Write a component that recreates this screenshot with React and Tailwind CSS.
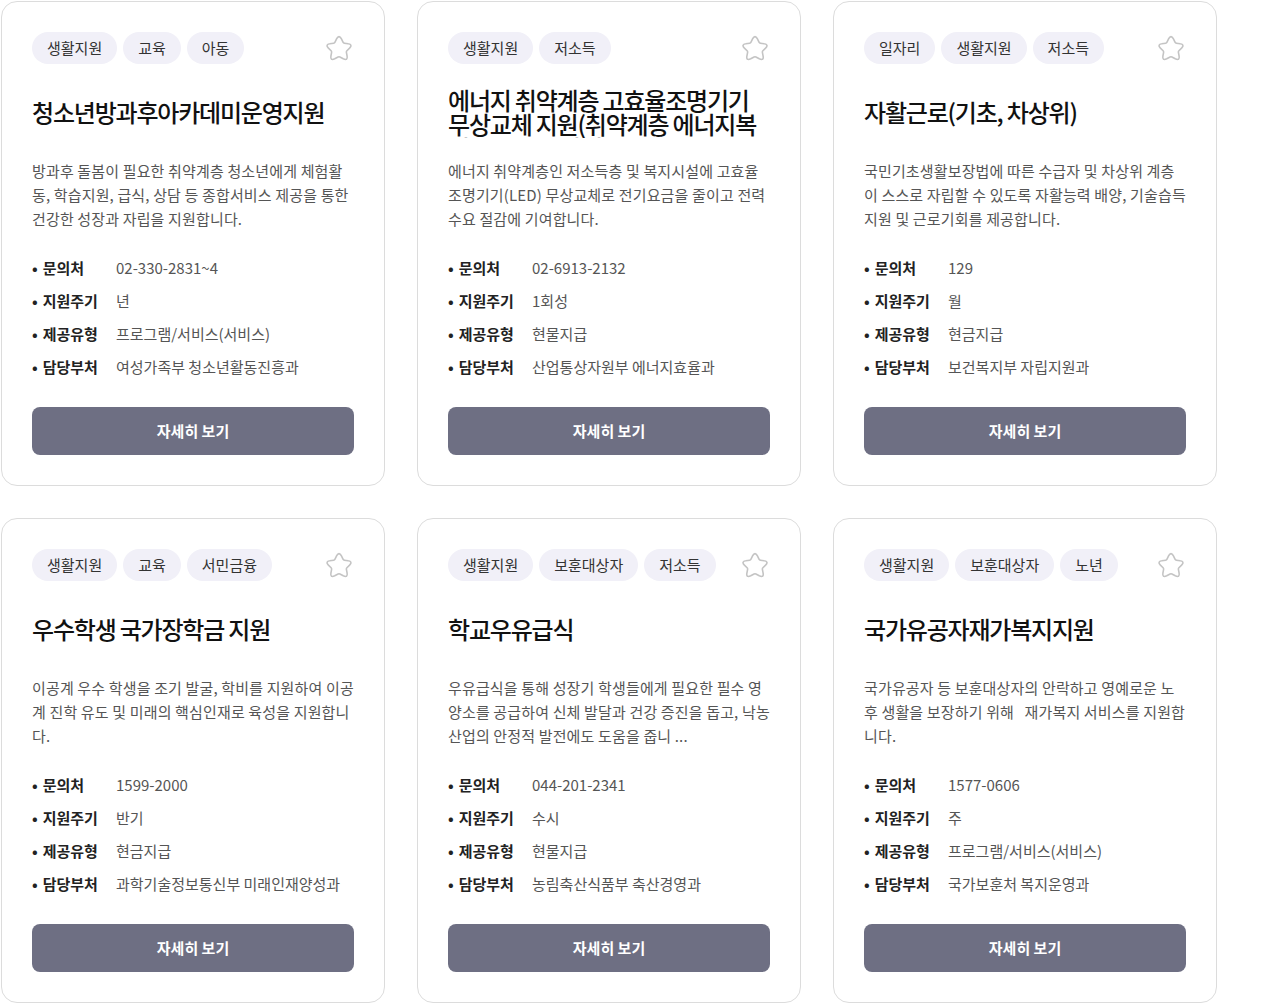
import React from 'react';

const cards = [
  {
    tags: ['생활지원', '교육', '아동'],
    title: '청소년방과후아카데미운영지원',
    desc: '방과후 돌봄이 필요한 취약계층 청소년에게 체험활동, 학습지원, 급식, 상담 등 종합서비스 제공을 통한 건강한 성장과 자립을 지원합니다.',
    info: ['02-330-2831~4', '년', '프로그램/서비스(서비스)', '여성가족부 청소년활동진흥과'],
  },
  {
    tags: ['생활지원', '저소득'],
    title: '에너지 취약계층 고효율조명기기 무상교체 지원(취약계층 에너지복지 LED 보급사업)',
    long: true,
    desc: '에너지 취약계층인 저소득층 및 복지시설에 고효율 조명기기(LED) 무상교체로 전기요금을 줄이고 전력 수요 절감에 기여합니다.',
    info: ['02-6913-2132', '1회성', '현물지급', '산업통상자원부 에너지효율과'],
  },
  {
    tags: ['일자리', '생활지원', '저소득'],
    title: '자활근로(기초, 차상위)',
    desc: '국민기초생활보장법에 따른 수급자 및 차상위 계층이 스스로 자립할 수 있도록 자활능력 배양, 기술습득 지원 및 근로기회를 제공합니다.',
    info: ['129', '월', '현금지급', '보건복지부 자립지원과'],
  },
  {
    tags: ['생활지원', '교육', '서민금융'],
    title: '우수학생 국가장학금 지원',
    desc: '이공계 우수 학생을 조기 발굴, 학비를 지원하여 이공계 진학 유도 및 미래의 핵심인재로 육성을 지원합니다.',
    info: ['1599-2000', '반기', '현금지급', '과학기술정보통신부 미래인재양성과'],
  },
  {
    tags: ['생활지원', '보훈대상자', '저소득'],
    title: '학교우유급식',
    desc: '우유급식을 통해 성장기 학생들에게 필요한 필수 영양소를 공급하여 신체 발달과 건강 증진을 돕고, 낙농 산업의 안정적 발전에도 도움을 줍니 ...',
    info: ['044-201-2341', '수시', '현물지급', '농림축산식품부 축산경영과'],
  },
  {
    tags: ['생활지원', '보훈대상자', '노년'],
    title: '국가유공자재가복지지원',
    desc: '국가유공자 등 보훈대상자의 안락하고 영예로운 노후 생활을 보장하기 위해 \u00a0 재가복지 서비스를 지원합니다.',
    info: ['1577-0606', '주', '프로그램/서비스(서비스)', '국가보훈처 복지운영과'],
  },
];

const labels = ['문의처', '지원주기', '제공유형', '담당부처'];

// rounded outline star
const StarIcon = () => (
  <svg width="30" height="30" viewBox="0 0 30 30" fill="none">
    <path
      d="M15 3.6c1 0 1.6.7 2.3 2.1l1.7 3.5c.3.6.8.9 1.4 1l3.8.6c1.5.2 2.4.6 2.7 1.5.3.9-.2 1.8-1.3 2.8l-2.7 2.7c-.4.4-.6 1-.5 1.6l.7 3.8c.3 1.5.2 2.5-.6 3-.8.6-1.8.3-3.2-.4l-3.4-1.8c-.6-.3-1.2-.3-1.8 0l-3.4 1.8c-1.4.7-2.4 1-3.2.4-.8-.5-.9-1.5-.6-3l.7-3.8c.1-.6-.1-1.2-.5-1.6l-2.7-2.7c-1.1-1-1.6-1.9-1.3-2.8.3-.9 1.2-1.3 2.7-1.5l3.8-.6c.6-.1 1.1-.4 1.4-1l1.7-3.5c.7-1.4 1.3-2.1 2.3-2.1z"
      stroke="#c4c4c4"
      strokeWidth="1.6"
      strokeLinejoin="round"
    />
  </svg>
);

const Card = ({ card }) => (
  <div className="flex flex-col rounded-2xl border border-[#dcdcdc] bg-white px-[30px] pt-[30px] pb-[30px]">
    {/* tags + favourite */}
    <div className="flex items-center justify-between">
      <div className="flex gap-[6px]">
        {card.tags.map((t) => (
          <span
            key={t}
            className="flex h-8 items-center rounded-full bg-[#f1f0f8] px-[15px] text-[15px] text-[#333]"
          >
            {t}
          </span>
        ))}
      </div>
      <StarIcon />
    </div>

    {/* title: two lines at most, the rest is cut */}
    <div className="mt-[22px] flex h-[52px] items-center">
      <h3
        className={
          card.long
            ? 'max-h-[52px] overflow-hidden py-[2px] text-[24px] leading-[24px] font-medium tracking-[-1.2px] text-[#111]'
            : 'py-[2px] text-[24px] leading-[24px] font-medium tracking-[-1.2px] text-[#111]'
        }
      >
        {card.title}
      </h3>
    </div>

    <p className="mt-[21px] h-[72px] text-[15px] leading-[24px] tracking-[0.15px] text-[#555]">
      {card.desc}
    </p>

    <ul className="mt-[26px] flex flex-col gap-[11px]">
      {labels.map((l, i) => (
        <li key={l} className="flex h-[22px] items-center text-[15px]">
          <span className="w-[84px] shrink-0 font-bold text-[#222]">
            <span className="mr-[5px]">•</span>
            {l}
          </span>
          <span className="text-[#555]">{card.info[i]}</span>
        </li>
      ))}
    </ul>

    <button className="mt-[29px] flex h-12 w-full items-center justify-center rounded-lg bg-[#6e6f83] text-[15px] font-bold text-white">
      자세히 보기
    </button>
  </div>
);

const App = () => {
  return (
    <div
      className="min-h-screen bg-white pt-[1px] pl-[1px]"
      style={{ fontFamily: '"Noto Sans CJK KR", "Noto Sans", sans-serif' }}
    >
      <div className="grid w-[1216px] grid-cols-3 gap-8">
        {cards.map((c, i) => (
          <Card key={i} card={c} />
        ))}
      </div>
    </div>
  );
};

export default App;
